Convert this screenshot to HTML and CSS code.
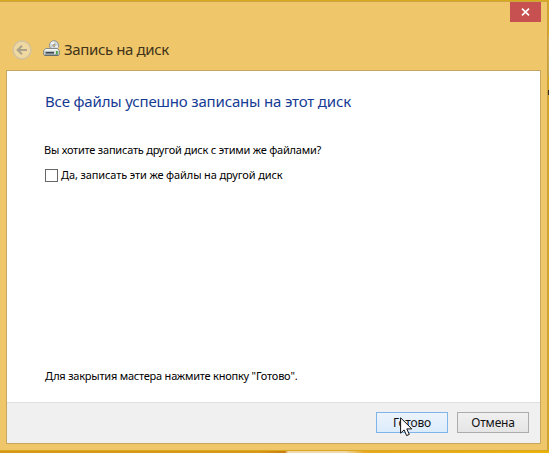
FILE: index.html
```html
<!DOCTYPE html>
<html lang="ru">
<head>
<meta charset="utf-8">
<title>Запись на диск</title>
<link rel="stylesheet" href="styles.css">
</head>
<body>
<div class="desktop">
  <div class="window">
    <div class="caption">
      <button class="close" aria-label="Закрыть">
        <svg width="9" height="8" viewBox="0 0 9 8"><path d="M1 .6 8 7.4M8 .6 1 7.4" stroke="#fff" stroke-width="1.6" fill="none"/></svg>
      </button>
    </div>
    <header class="header">
      <svg class="back" width="20" height="20" viewBox="0 0 20 20">
        <circle cx="10" cy="10" r="8.9" fill="#f0d9a0" stroke="#d1c3a0" stroke-width="1.5"/>
        <path d="M15 10H6M10 5.7 5.7 10 10 14.3" fill="none" stroke="#aca38b" stroke-width="2.2"/>
      </svg>
      <svg class="drive" width="17" height="17" viewBox="0 0 17 17">
        <circle cx="11" cy="5.3" r="4.6" fill="#d3d6d6" stroke="#8f9596" stroke-width="1"/>
        <path d="M8 2.5 11 5.3 10 1.3M11 5.3l4 2" fill="none" stroke="#fff" stroke-width="1.2"/>
        <circle cx="11" cy="5.3" r="1.2" fill="#f2d487" stroke="#7c8384" stroke-width=".8"/>
        <path d="M2.7 8.6.7 10.6v3.8l1 1h13.6l1-1v-3.8l-1.8-2z" fill="#d9dedc" stroke="#6f797c" stroke-width=".9"/>
        <path d="M3 8.9h11l1.4 1.5H1.5z" fill="#f6f6f2"/>
        <path d="M2.5 12.7h8.5" stroke="#3b4850" stroke-width="1.8"/>
        <path d="M1.5 15.1h14" stroke="#4f5b61" stroke-width="1"/>
        <path d="M13.9 11.1v3.2" stroke="#47a344" stroke-width="1.8"/>
      </svg>
      <span class="title">Запись на диск</span>
    </header>
    <main class="panel">
      <div class="content">
        <h1 class="heading">Все файлы успешно записаны на этот диск</h1>
        <p class="text question">Вы хотите записать другой диск с этими же файлами?</p>
        <label class="option"><span class="box"></span><span class="text choice">Да, записать эти же файлы на другой диск</span></label>
        <p class="text hint">Для закрытия мастера нажмите кнопку "Готово".</p>
      </div>
      <footer class="footer">
        <button class="button primary">Готово</button>
        <button class="button">Отмена</button>
      </footer>
    </main>
  </div>
  <svg class="cursor" width="13" height="20" viewBox="0 0 13 20"><path d="M.6.8v15.4l3.5-3.3 2.5 5.7 2.7-1.2-2.5-5.5h5z" fill="#fff" stroke="#111" stroke-width="1"/></svg>
</div>
</body>
</html>
```
FILE: styles.css
```css
* { box-sizing: border-box; }
body { margin: 0; font-family: "Noto Sans", "Open Sans", sans-serif; }
.desktop {
  position: relative;
  width: 549px;
  height: 453px;
  padding: 1px 1px 3px 0;
  overflow: hidden;
  background:
    linear-gradient(#d7ae55, #c8a850) 548px 36px / 1px 40px no-repeat,
    linear-gradient(#3c2b08, #3c2b08) 548px 90px / 1px 5px no-repeat,
    linear-gradient(90deg, #d99716 0 260px, #c97d12 285px, #f0d9ae 288px 345px, #e8a820 365px, #eab308) 0 451px / 100% 2px no-repeat,
    #d8a91c;
}
.window {
  display: flex;
  flex-direction: column;
  height: 449px;
  padding: 0 6px 6px;
  background: #efc66a;
  border-top: 1px solid #cda443;
  border-right: 1px solid #c9a040;
}
.caption { display: flex; justify-content: flex-end; height: 20px; flex: none; }
.close {
  display: flex;
  align-items: center;
  justify-content: center;
  width: 31px;
  height: 20px;
  padding: 0;
  border: 0;
  background: #c75050;
}
.header { display: flex; align-items: center; height: 48px; flex: none; padding: 7px 0 0 6px; }
.drive { margin: -2px 0 0 11px; }
.title { margin: -1px 0 0 4px; font-size: 15px; line-height: 20px; letter-spacing: -.38px; color: #3f3419; white-space: nowrap; }
.panel {
  display: flex;
  flex-direction: column;
  flex: 1;
  border: 1px solid #c7a760;
  background: #fff;
}
.content { display: flex; flex-direction: column; flex: 1; padding: 18px 37px 18px; }
.heading { margin: 0 0 0 1px; font-size: 15px; line-height: 24px; letter-spacing: -.17px; font-weight: 400; color: #153b94; white-space: nowrap; }
.text { margin: 0; font-size: 11px; line-height: 16px; letter-spacing: -.22px; color: #000; white-space: nowrap; }
.question { margin-top: 29px; }
.option { display: flex; align-items: center; height: 16px; margin-top: 9px; }
.box { width: 13px; height: 13px; margin-left: 1px; border: 1px solid #666; background: #fff; }
.choice { margin-left: 3px; letter-spacing: -.12px; }
.hint { margin-top: auto; margin-left: 1px; }
.footer {
  display: flex;
  justify-content: flex-end;
  gap: 9px;
  height: 41px;
  padding: 9px 11px 0 0;
  border-top: 1px solid #dfdfdf;
  background: #f0f0f0;
}
.button {
  width: 72px;
  height: 21px;
  padding: 0;
  border: 1px solid #acacac;
  background: linear-gradient(#f0f0f0, #e5e5e5);
  font: 12px/17px "Noto Sans", sans-serif;
  letter-spacing: -.2px;
  color: #111;
}
.primary { border-color: #7eb4ea; background: linear-gradient(#ecf4fc, #dcecfc); }
.cursor { position: absolute; left: 400px; top: 417px; }
```
